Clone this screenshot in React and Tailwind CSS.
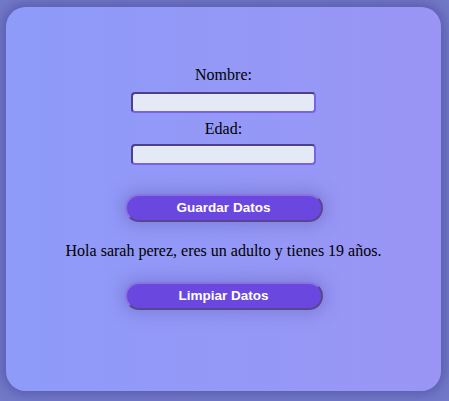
import React, { useState } from 'react';

const App = () => {
  const [nombre, setNombre] = useState('');
  const [edad, setEdad] = useState('');
  const [mensaje, setMensaje] = useState('Hola sarah perez, eres un adulto y tienes 19 años.');

  const guardar = () => {
    const n = parseInt(edad, 10);
    if (!nombre || isNaN(n)) return;
    setMensaje(`Hola ${nombre}, eres ${n >= 18 ? 'un adulto' : 'menor de edad'} y tienes ${n} años.`);
  };

  const limpiar = () => {
    setNombre('');
    setEdad('');
    setMensaje('');
  };

  return (
    <div className="h-[401px] w-[449px] bg-[#7379c9] pt-[7px] pl-[6px] font-['Liberation_Serif',serif] text-black">
      <div className="flex h-[384px] w-[435px] flex-col items-center rounded-[20px] bg-gradient-to-r from-[#8e9bf9] to-[#9a95f5] pt-[59px] shadow-[0_0_12px_4px_rgba(60,60,140,0.45)]">
        <label className="text-base leading-[18px]">Nombre:</label>
        <input
          value={nombre}
          onChange={(e) => setNombre(e.target.value)}
          className="mt-[8px] h-[21px] w-[185px] rounded-[4px] border-2 border-[#7a62e4] bg-[#e4e9f6] px-1 text-sm outline-none [border-style:inset]"
        />
        <label className="mt-[7px] text-base leading-[18px]">Edad:</label>
        <input
          value={edad}
          onChange={(e) => setEdad(e.target.value)}
          className="mt-[6px] h-[21px] w-[185px] rounded-[4px] border-2 border-[#7a62e4] bg-[#e4e9f6] px-1 text-sm outline-none [border-style:inset]"
        />
        <button
          onClick={guardar}
          className="mt-[29px] h-[28px] w-[198px] rounded-full border-2 border-[#8a72e2] bg-[#6a48e0] font-['Liberation_Sans',sans-serif] text-[13.5px] font-bold text-white shadow-[0_0_16px_4px_rgba(90,80,170,0.35)] [border-style:outset]"
        >
          Guardar Datos
        </button>
        <p className="mt-[20px] h-[18px] text-base leading-[18px]">{mensaje}</p>
        <button
          onClick={limpiar}
          className="mt-[22px] h-[28px] w-[198px] rounded-full border-2 border-[#8a72e2] bg-[#6a48e0] font-['Liberation_Sans',sans-serif] text-[13.5px] font-bold text-white shadow-[0_0_16px_4px_rgba(90,80,170,0.35)] [border-style:outset]"
        >
          Limpiar Datos
        </button>
      </div>
    </div>
  );
};

export default App;
